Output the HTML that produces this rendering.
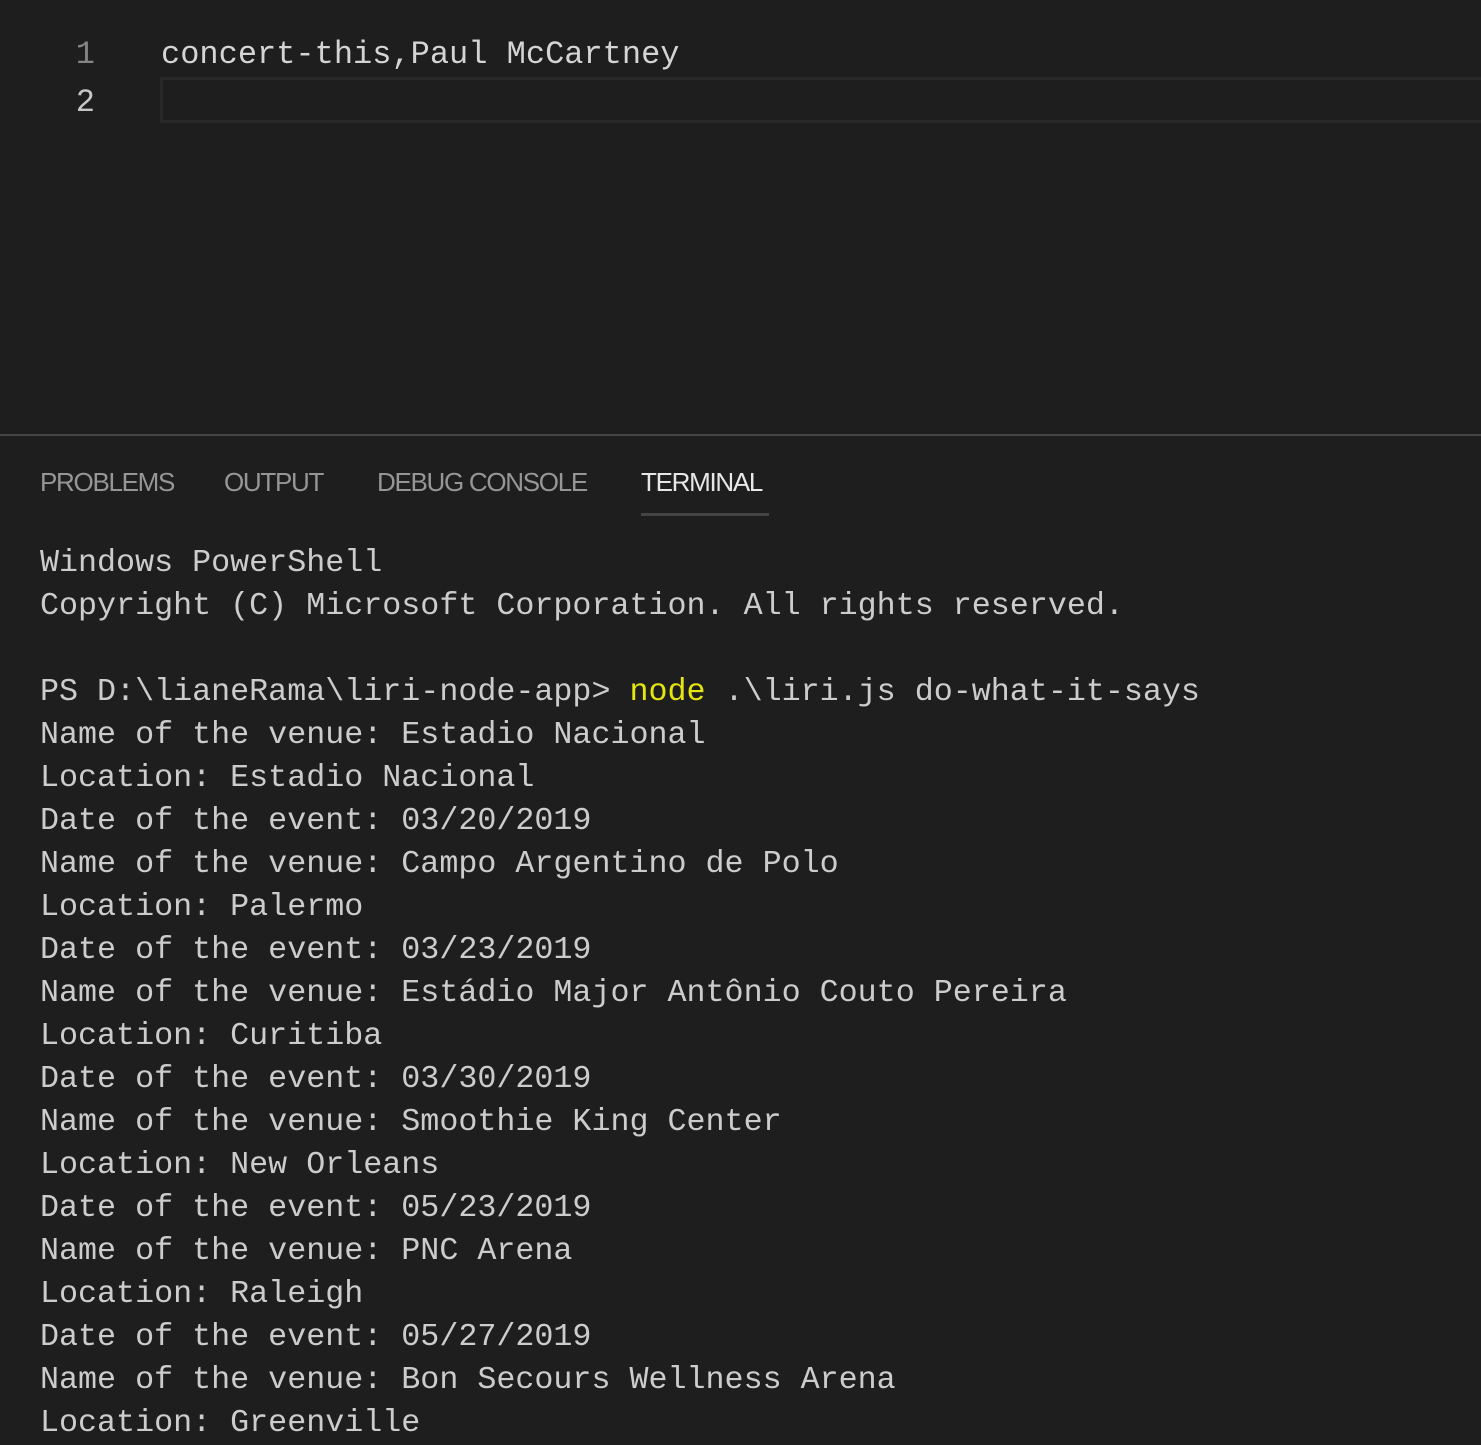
<!DOCTYPE html>
<html><head><style>
body{margin:0;width:1481px;height:1425px;background:#1e1e1e;overflow:hidden;position:relative;font-family:"Liberation Mono",monospace}
.ln{position:absolute;left:60px;width:35px;text-align:right;font-size:32px;color:#858585}
.code{position:absolute;left:161px;font-size:32px;color:#d4d4d4;white-space:pre}
.cur{position:absolute;left:160px;top:77px;right:-5px;height:40px;border:3px solid #282828}
.sep{position:absolute;left:0;right:0;top:434px;height:2px;background:#444}
.tab{position:absolute;top:467px;font-family:"Liberation Sans",sans-serif;font-size:26px;color:#969696;letter-spacing:-1.3px;white-space:nowrap}
.term{position:absolute;left:40px;top:542px;font-size:31.7px;line-height:43px;color:#cccccc;white-space:pre}
.y{color:#e5e510}
</style></head><body>
<div class="cur"></div>
<div class="ln" style="top:36px">1</div>
<div class="ln" style="top:84px;color:#c6c6c6">2</div>
<div class="code" style="top:36px">concert-this,Paul McCartney</div>
<div class="sep"></div>
<div class="tab" style="left:40px">PROBLEMS</div>
<div class="tab" style="left:224px">OUTPUT</div>
<div class="tab" style="left:377px">DEBUG CONSOLE</div>
<div class="tab" style="left:641px;color:#e7e7e7">TERMINAL</div>
<div style="position:absolute;left:641px;top:513px;width:128px;height:3px;background:#444"></div>
<div class="term">Windows PowerShell
Copyright (C) Microsoft Corporation. All rights reserved.

PS D:\lianeRama\liri-node-app&gt; <span class="y">node</span> .\liri.js do-what-it-says
Name of the venue: Estadio Nacional
Location: Estadio Nacional
Date of the event: 03/20/2019
Name of the venue: Campo Argentino de Polo
Location: Palermo
Date of the event: 03/23/2019
Name of the venue: Estádio Major Antônio Couto Pereira
Location: Curitiba
Date of the event: 03/30/2019
Name of the venue: Smoothie King Center
Location: New Orleans
Date of the event: 05/23/2019
Name of the venue: PNC Arena
Location: Raleigh
Date of the event: 05/27/2019
Name of the venue: Bon Secours Wellness Arena
Location: Greenville</div>
</body></html>
